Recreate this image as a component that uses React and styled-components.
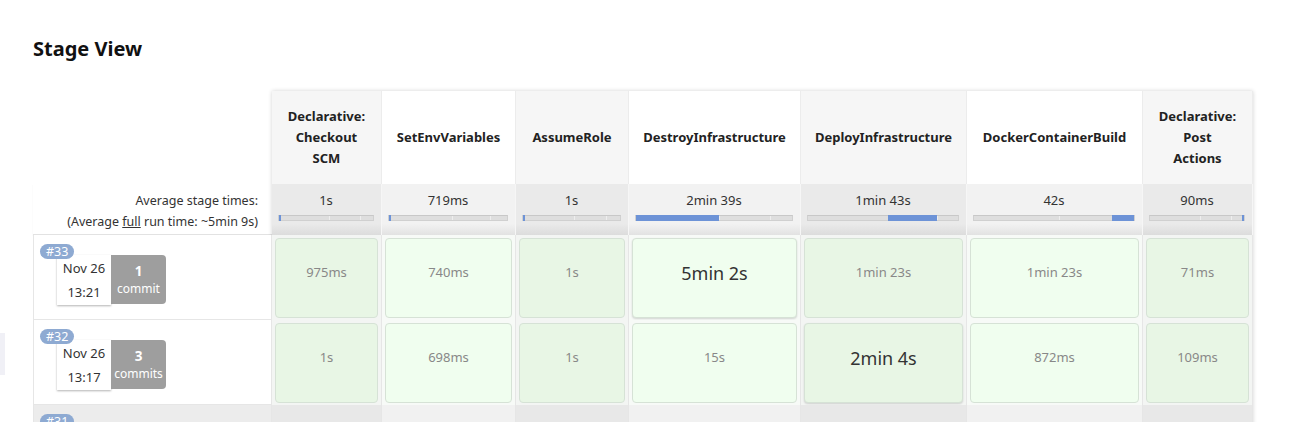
import React from 'react'
import styled, { createGlobalStyle } from 'styled-components'

const GlobalStyle = createGlobalStyle`
body {
    margin: 0;
    background: #fff;
    font-family: "Noto Sans", "Open Sans", sans-serif;
    color: #333;
    overflow: hidden;
}
`

const Page = styled.div`
padding: 33px 0 0 33px;
`

const Title = styled.h2`
margin: 0 0 26px 0;
font-size: 20px;
line-height: 32px;
font-weight: 700;
color: #111;
`

const SideTab = styled.div`
position: fixed;
left: 0;
top: 333px;
width: 5px;
height: 42px;
background: #f0f0f6;
`

const Table = styled.div`
display: flex;
flex-direction: row;
align-items: flex-start;
`

const LeftCol = styled.div`
display: flex;
flex-direction: column;
width: 239px;
`

const LeftSpacer = styled.div`
height: 93px;
`

const AvgLabel = styled.div`
height: 51px;
box-sizing: border-box;
padding: 6px 14px 0 0;
text-align: right;
font-size: 12.5px;
line-height: 21px;
color: #333;
border-bottom: 1px solid #e2e2e2;
box-shadow: 0 1px 1px rgba(0, 0, 0, 0.08);
u {
    text-decoration: underline;
}
`

const BuildCell = styled.div`
position: relative;
height: 85px;
box-sizing: border-box;
border: 1px solid #e6e6e6;
border-top: none;
background: ${props => (props.$faded ? '#ececec' : '#fff')};
`

const Badge = styled.div`
position: absolute;
left: 6px;
top: 9px;
z-index: 2;
height: 15px;
padding: 0 6px;
border-radius: 8px;
background: #8eaad2;
color: #fff;
font-size: 12.5px;
line-height: 15px;
`

const Changeset = styled.div`
display: flex;
flex-direction: row;
margin: 20px 0 0 23px;
`

const DateBox = styled.div`
width: 54px;
height: 50px;
display: flex;
flex-direction: column;
align-items: center;
justify-content: center;
gap: 4px;
background: #fff;
box-shadow: 0 1px 2px rgba(0, 0, 0, 0.3);
font-size: 13px;
line-height: 20px;
color: #333;
`

const CommitBox = styled.div`
width: 55px;
height: 49px;
display: flex;
flex-direction: column;
align-items: center;
justify-content: center;
background: #9e9e9e;
border-radius: 0 4px 4px 0;
color: #fff;
font-size: 12px;
line-height: 18px;
b {
    font-size: 13.5px;
}
`

const StagesBox = styled.div`
display: flex;
flex-direction: column;
box-shadow: 0 0 4px rgba(0, 0, 0, 0.18);
`

const Row = styled.div`
display: flex;
flex-direction: row;
`

const HeadCell = styled.div`
width: ${props => props.$w}px;
height: 93px;
box-sizing: border-box;
display: flex;
align-items: center;
justify-content: center;
text-align: center;
padding: 0 8px;
font-size: 13px;
font-weight: 700;
line-height: 21px;
color: #222;
background: ${props => (props.$alt ? '#f6f6f6' : '#fff')};
border-right: 1px solid #ececec;
`

const AvgCell = styled.div`
width: ${props => props.$w}px;
height: 51px;
box-sizing: border-box;
padding: 6px 7px 0 6px;
text-align: center;
font-size: 13px;
line-height: 20px;
color: #333;
border-right: 1px solid #f6f6f6;
background: ${props => (props.$alt
        ? 'linear-gradient(to bottom, #eaeaea 0%, #eaeaea 78%, #dcdcdc 100%)'
        : 'linear-gradient(to bottom, #f2f2f2 0%, #f2f2f2 78%, #e2e2e2 100%)')};
`

const Track = styled.div`
position: relative;
height: 4px;
margin-top: 5px;
background: #dedede;
border: 1px solid #d0d0d0;
border-top-color: #c8c8c8;
`

const Divider = styled.div`
position: absolute;
top: 0;
bottom: 0;
width: 1px;
background: #eeeeee;
`

const Fill = styled.div`
position: absolute;
top: -1px;
bottom: -1px;
background: #6d93d7;
`

const StageCell = styled.div`
width: ${props => props.$w}px;
height: 85px;
box-sizing: border-box;
padding: 3px 3px 2px 3px;
border-right: 1px solid #e6e6e6;
background: ${props => (props.$faded
        ? (props.$alt ? '#e8e8e8' : '#f1f1f1')
        : (props.$alt ? '#f3f5f3' : '#f7faf7'))};
`

const Duration = styled.div`
height: 100%;
box-sizing: border-box;
border: 1px solid #d6e2d6;
border-radius: 4px;
padding-top: ${props => (props.$big ? '22px' : '23px')};
text-align: center;
background: ${props => (props.$alt ? '#e8f6e5' : '#f0feef')};
color: ${props => (props.$big ? '#333' : '#888')};
font-size: ${props => (props.$big ? '18px' : '13px')};
line-height: ${props => (props.$big ? '24px' : '20px')};
box-shadow: ${props => (props.$big ? '0 1px 2px rgba(0,0,0,0.15)' : 'none')};
`

const stages = [
    { name: ['Declarative:', 'Checkout', 'SCM'], w: 110, avg: '1s', fill: [0, 2] },
    { name: ['SetEnvVariables'], w: 134, avg: '719ms', fill: [0, 1.5] },
    { name: ['AssumeRole'], w: 113, avg: '1s', fill: [0, 2] },
    { name: ['DestroyInfrastructure'], w: 172, avg: '2min 39s', fill: [0, 53] },
    { name: ['DeployInfrastructure'], w: 166, avg: '1min 43s', fill: [53, 86] },
    { name: ['DockerContainerBuild'], w: 176, avg: '42s', fill: [86, 100] },
    { name: ['Declarative:', 'Post', 'Actions'], w: 110, avg: '90ms', fill: [98, 100] },
]

const builds = [
    { id: '#33', date: 'Nov 26', time: '13:21', commits: 1, times: ['975ms', '740ms', '1s', '5min 2s', '1min 23s', '1min 23s', '71ms'], big: 3 },
    { id: '#32', date: 'Nov 26', time: '13:17', commits: 3, times: ['1s', '698ms', '1s', '15s', '2min 4s', '872ms', '109ms'], big: 4 },
]

function ProgressBar({ fill }) {
    return (
        <Track>
            <Divider style={{ left: '53%' }} />
            <Divider style={{ left: '86%' }} />
            <Fill style={{ left: `${fill[0]}%`, width: `${fill[1] - fill[0]}%` }} />
        </Track>
    )
}

export default function App() {
    return (
        <Page>
            <GlobalStyle />
            <SideTab />
            <Title>Stage View</Title>
            <Table>
                <LeftCol>
                    <LeftSpacer />
                    <AvgLabel>
                        Average stage times:<br />
                        (Average <u>full</u> run time: ~5min 9s)
                    </AvgLabel>
                    {builds.map(b => (
                        <BuildCell key={b.id}>
                            <Badge>{b.id}</Badge>
                            <Changeset>
                                <DateBox>
                                    <span>{b.date}</span>
                                    <span>{b.time}</span>
                                </DateBox>
                                <CommitBox>
                                    <b>{b.commits}</b>
                                    <span>{b.commits === 1 ? 'commit' : 'commits'}</span>
                                </CommitBox>
                            </Changeset>
                        </BuildCell>
                    ))}
                    <BuildCell $faded>
                        <Badge>#31</Badge>
                    </BuildCell>
                </LeftCol>
                <StagesBox>
                    <Row>
                        {stages.map((s, i) => (
                            <HeadCell key={i} $w={s.w} $alt={i % 2 === 0}>
                                <div>{s.name.map((n, j) => <div key={j}>{n}</div>)}</div>
                            </HeadCell>
                        ))}
                    </Row>
                    <Row>
                        {stages.map((s, i) => (
                            <AvgCell key={i} $w={s.w} $alt={i % 2 === 0}>
                                {s.avg}
                                <ProgressBar fill={s.fill} />
                            </AvgCell>
                        ))}
                    </Row>
                    {builds.map(b => (
                        <Row key={b.id}>
                            {stages.map((s, i) => (
                                <StageCell key={i} $w={s.w} $alt={i % 2 === 0}>
                                    <Duration $alt={i % 2 === 0} $big={b.big === i}>{b.times[i]}</Duration>
                                </StageCell>
                            ))}
                        </Row>
                    ))}
                    <Row>
                        {stages.map((s, i) => (
                            <StageCell key={i} $w={s.w} $alt={i % 2 === 0} $faded />
                        ))}
                    </Row>
                </StagesBox>
            </Table>
        </Page>
    )
}
